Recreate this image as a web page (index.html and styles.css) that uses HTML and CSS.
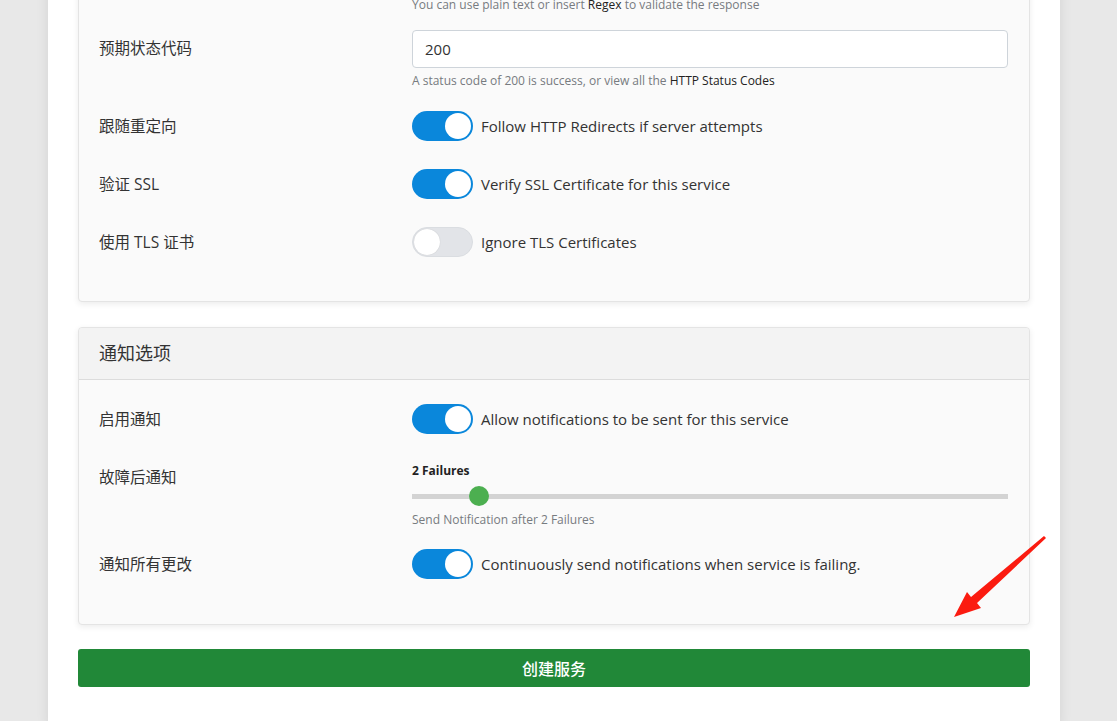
FILE: index.html
```html
<!DOCTYPE html>
<html lang="zh">
<head>
<meta charset="utf-8">
<title>创建服务</title>
<link rel="stylesheet" href="styles.css">
</head>
<body>
<div class="page">
  <div class="content">
    <div class="card card-top">
      <div class="card-body">
        <div class="row row-hint-top">
          <div></div>
          <div class="hint">You can use plain text or insert <span class="dark">Regex</span> to validate the response</div>
        </div>
        <div class="row row-input">
          <label class="label label-input">预期状态代码</label>
          <div>
            <input class="input" type="text" value="200">
            <div class="hint hint-below">A status code of 200 is success, or view all the <span class="dark">HTTP Status Codes</span></div>
          </div>
        </div>
        <div class="row row-toggle">
          <label class="label">跟随重定向</label>
          <div class="toggle-line"><span class="toggle on"><span class="knob"></span></span><span class="toggle-text">Follow HTTP Redirects if server attempts</span></div>
        </div>
        <div class="row row-toggle">
          <label class="label">验证 SSL</label>
          <div class="toggle-line"><span class="toggle on"><span class="knob"></span></span><span class="toggle-text">Verify SSL Certificate for this service</span></div>
        </div>
        <div class="row row-toggle row-last">
          <label class="label">使用 TLS 证书</label>
          <div class="toggle-line"><span class="toggle off"><span class="knob"></span></span><span class="toggle-text">Ignore TLS Certificates</span></div>
        </div>
      </div>
    </div>

    <div class="card card-notify">
      <div class="card-header">通知选项</div>
      <div class="card-body body-notify">
        <div class="row row-toggle">
          <label class="label">启用通知</label>
          <div class="toggle-line"><span class="toggle on"><span class="knob"></span></span><span class="toggle-text">Allow notifications to be sent for this service</span></div>
        </div>
        <div class="row row-slider">
          <label class="label label-slider">故障后通知</label>
          <div>
            <div class="slider-value">2 Failures</div>
            <div class="slider">
              <div class="track"></div>
              <div class="thumb" style="left: 67px"></div>
            </div>
            <div class="hint">Send Notification after 2 Failures</div>
          </div>
        </div>
        <div class="row row-toggle row-last">
          <label class="label">通知所有更改</label>
          <div class="toggle-line"><span class="toggle on"><span class="knob"></span></span><span class="toggle-text">Continuously send notifications when service is failing.</span></div>
        </div>
      </div>
    </div>

    <button class="submit" type="button">创建服务</button>
  </div>
</div>
<svg class="arrow" width="1117" height="721" viewBox="0 0 1117 721" aria-hidden="true">
  <polygon points="1044,536 1046,538 977,603 981,608 954,617 967,592 971,597" fill="#fb1b10"/>
</svg>
</body>
</html>
```

FILE: styles.css
```css
html, body {
  margin: 0;
  padding: 0;
  height: 100%;
  overflow: hidden;
}
body {
  background: #e8e8e8;
  font-family: "Open Sans", "Noto Sans CJK SC", sans-serif;
  color: #212529;
  position: relative;
}
.page {
  width: 1012px;
  margin-left: 48px;
  min-height: 100%;
  background: #ffffff;
  box-shadow: 0 0 12px rgba(0, 0, 0, 0.09);
}
.content {
  padding: 0 30px 40px;
}
.card {
  background: #fafafa;
  border: 1px solid #e4e4e4;
  border-radius: 4px;
  box-shadow: 0 2px 6px rgba(0, 0, 0, 0.08);
}
.card-top {
  margin-top: -35px;
}
.card-body {
  padding: 20px 21px 16px 20px;
}
.card-top .card-body {
  padding-top: 30px;
}
.row {
  display: grid;
  grid-template-columns: 313px 1fr;
}
.label {
  font-size: 15.5px;
  line-height: 22px;
  color: #333;
}
.label-input {
  padding-top: 7px;
}
.row-hint-top {
  margin-bottom: 16px;
}
.hint {
  font-size: 12px;
  line-height: 18px;
  color: #777b80;
}
.hint .dark {
  color: #222;
}
.hint-below {
  margin-top: 4px;
}
.row-input {
  margin-bottom: 21px;
}
.input {
  display: block;
  box-sizing: border-box;
  width: 100%;
  height: 38px;
  padding: 0 12px;
  font: inherit;
  font-size: 15px;
  color: #333;
  background: #fff;
  border: 1px solid #ced4da;
  border-radius: 4px;
}
.row-toggle {
  align-items: center;
  margin-bottom: 28px;
}
.row-last {
  margin-bottom: 28px;
}
.toggle-line {
  display: flex;
  align-items: center;
  height: 30px;
}
.toggle {
  position: relative;
  display: inline-block;
  box-sizing: border-box;
  width: 61px;
  height: 30px;
  border-radius: 15px;
  margin-right: 8px;
  flex: none;
}
.toggle.on {
  background: #0a87db;
}
.toggle.off {
  background: #e2e4e8;
  border: 1px solid #dadde1;
}
.knob {
  position: absolute;
  top: 2px;
  width: 26px;
  height: 26px;
  border-radius: 50%;
  background: #fff;
}
.toggle.on .knob {
  right: 2px;
}
.toggle.off .knob {
  top: 1px;
  left: 1px;
  box-shadow: 0 0 1px rgba(0,0,0,0.2);
}
.toggle-text {
  font-size: 15px;
  color: #333;
}
.card-notify {
  margin-top: 25px;
}
.card-header {
  background: #f3f3f3;
  border-bottom: 1px solid #dcdcdc;
  border-radius: 4px 4px 0 0;
  padding: 13px 20px;
  font-size: 18px;
  line-height: 25px;
  color: #333;
}
.body-notify {
  padding-top: 24px;
  padding-bottom: 17px;
}
.row-slider {
  margin-bottom: 20px;
}
.label-slider {
  padding-top: 4px;
}
.slider-value {
  font-size: 12px;
  line-height: 18px;
  font-weight: 700;
  color: #222;
}
.slider {
  position: relative;
  height: 31px;
}
.track {
  position: absolute;
  left: 0;
  right: 0;
  top: 14px;
  height: 5px;
  background: #d3d3d3;
}
.thumb {
  position: absolute;
  top: 6px;
  width: 20px;
  height: 20px;
  margin-left: -10px;
  border-radius: 50%;
  background: #4caf50;
}
.submit {
  display: block;
  width: 100%;
  height: 38px;
  margin-top: 24px;
  border: none;
  border-radius: 3px;
  background: #218838;
  color: #fff;
  font-family: "Open Sans", "Noto Sans CJK SC", sans-serif;
  font-size: 16px;
  font-weight: 500;
  cursor: pointer;
}
.arrow {
  position: absolute;
  left: 0;
  top: 0;
  pointer-events: none;
}
```
